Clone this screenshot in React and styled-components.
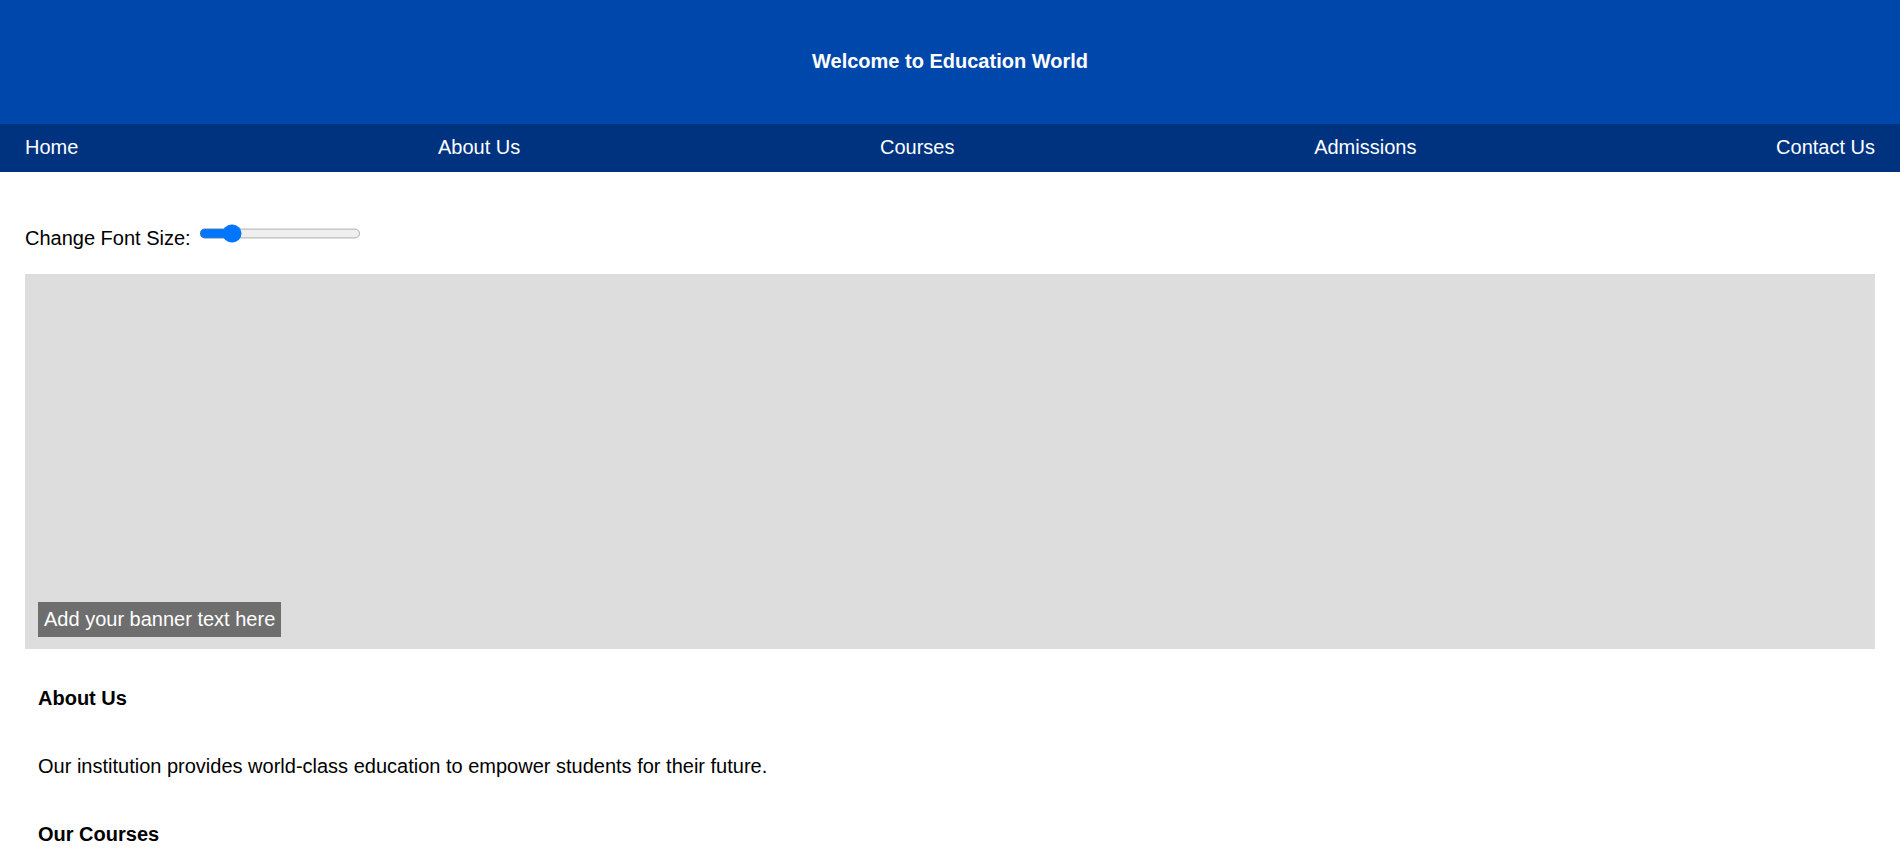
import React, { useState } from "react";
import styled, { createGlobalStyle } from "styled-components";

const GlobalStyle = createGlobalStyle`
  html, body {
    margin: 0;
    padding: 0;
    background: #fff;
  }
  body {
    font-family: "Liberation Sans", Arial, sans-serif;
    font-size: 20px;
    line-height: 23px;
    color: #000;
  }
`;

const Header = styled.header`
  height: 124px;
  box-sizing: border-box;
  padding-bottom: 2px;
  background: #0047ab;
  color: #fff;
  display: flex;
  align-items: center;
  justify-content: center;
`;

const Title = styled.h1`
  margin: 0;
  font-size: 20px;
  font-weight: bold;
  line-height: 23px;
`;

const Nav = styled.nav`
  height: 48px;
  box-sizing: border-box;
  padding: 0 25px 2px;
  background: #00337f;
  display: flex;
  align-items: center;
  justify-content: space-between;
`;

const NavLink = styled.a`
  color: #fff;
  text-decoration: none;
  font-size: 20px;
  cursor: pointer;
`;

const Main = styled.main`
  padding: 0 25px;
`;

const Controls = styled.div`
  margin-top: 55px;
  height: 23px;
  display: flex;
  align-items: center;
  gap: 8px;
`;

const Range = styled.input`
  zoom: 1.22;
  margin: 0 0 8px 0;
  width: 133px;
`;

const Banner = styled.div`
  margin-top: 24px;
  height: 375px;
  box-sizing: border-box;
  padding: 13px 13px 12px;
  background: #dddddd;
  display: flex;
  align-items: flex-end;
`;

const BannerText = styled.div`
  padding: 6px;
  background: rgba(0, 0, 0, 0.5);
  color: #fff;
`;

const Section = styled.section`
  padding: 0 13px;
`;

const Heading = styled.h2`
  margin: ${(p) => p.$top}px 0 0;
  font-size: 20px;
  font-weight: bold;
  line-height: 23px;
`;

const Text = styled.p`
  margin: 45px 0 0;
`;

const links = ["Home", "About Us", "Courses", "Admissions", "Contact Us"];

export default function App() {
  const [size, setSize] = useState(16);

  return (
    <>
      <GlobalStyle />
      <Header>
        <Title>Welcome to Education World</Title>
      </Header>
      <Nav>
        {links.map((l) => (
          <NavLink key={l}>{l}</NavLink>
        ))}
      </Nav>
      <Main>
        <Controls>
          <span>Change Font Size:</span>
          <Range
            type="range"
            min="12"
            max="36"
            value={size}
            onChange={(e) => setSize(Number(e.target.value))}
          />
        </Controls>
        <Banner>
          <BannerText>Add your banner text here</BannerText>
        </Banner>
        <Section>
          <Heading $top={38}>About Us</Heading>
          <Text>
            Our institution provides world-class education to empower students
            for their future.
          </Text>
          <Heading $top={45}>Our Courses</Heading>
        </Section>
      </Main>
    </>
  );
}
